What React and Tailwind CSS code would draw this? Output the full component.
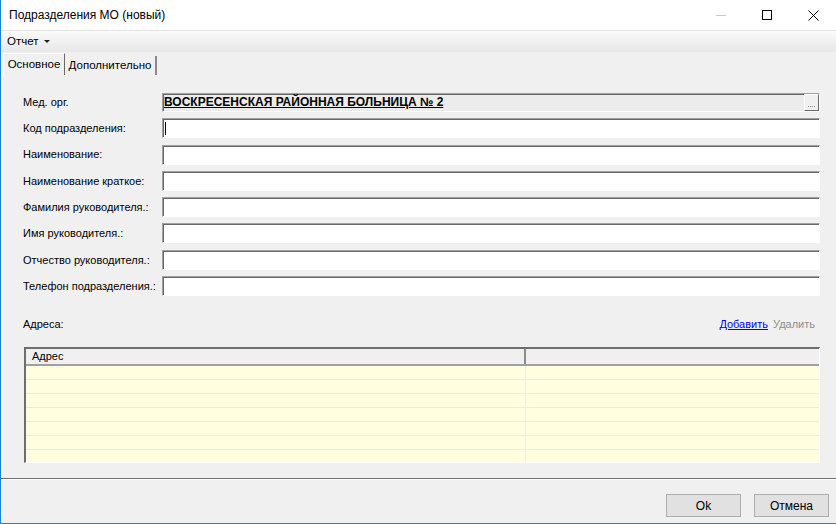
import React from "react";

const fields = [
  "Код подразделения:",
  "Наименование:",
  "Наименование краткое:",
  "Фамилия руководителя.:",
  "Имя руководителя.:",
  "Отчество руководителя.:",
  "Телефон подразделения.:",
];

const sunken =
  "border border-t-[#a0a0a0] border-l-[#a0a0a0] border-b-white border-r-white shadow-[inset_1px_1px_0_#696969]";

const App = () => {
  const rows = [0, 1, 2, 3, 4, 5, 6];

  return (
    <div
      className="w-[836px] h-[524px] bg-[#f0f0f0] flex flex-col border-l border-b border-[#1883d7] overflow-hidden text-[11px] text-black"
      style={{ fontFamily: '"Liberation Sans", Arial, sans-serif' }}
    >
      {/* title bar */}
      <div className="h-[30px] bg-white flex items-center shrink-0">
        <div className="pl-[8px] text-[12px] flex-1">Подразделения МО (новый)</div>
        <div className="flex items-center h-full">
          <div className="w-[46px] h-full flex items-center justify-center">
            <div className="w-[10px] h-px bg-[#c8c8c8]" />
          </div>
          <div className="w-[46px] h-full flex items-center justify-center">
            <div className="w-[10px] h-[10px] border border-black" />
          </div>
          <div className="w-[46px] h-full flex items-center justify-center">
            <svg width="11" height="11" viewBox="0 0 11 11">
              <path d="M0.5 0.5L10.5 10.5M10.5 0.5L0.5 10.5" stroke="#000" strokeWidth="1" />
            </svg>
          </div>
        </div>
      </div>

      {/* menu */}
      <div className="h-[22px] shrink-0 border-t border-[#e3e3e3] bg-gradient-to-b from-[#fbfbfb] to-[#e7e7e7] flex items-center pl-[6px] text-[11.5px]">
        <span>Отчет</span>
        <svg className="ml-[5px]" width="6" height="4" viewBox="0 0 6 4">
          <path d="M0 0H6L3 3Z" fill="#222" />
        </svg>
      </div>

      {/* tabs */}
      <div className="h-[23px] shrink-0 flex items-end pl-[2px]">
        <div className="h-[22px] w-[62px] flex items-center justify-center border-l border-t border-white border-r border-r-[#696969] bg-[#f0f0f0] text-[11.5px]">
          Основное
        </div>
        <div className="h-[19px] w-[92px] flex items-center justify-center border-r-2 border-[#8a8a8a] text-[11.5px]">
          Дополнительно
        </div>
      </div>

      {/* content */}
      <div className="flex-1 flex flex-col border-l border-white ml-px pt-[17px] pr-[16px]">
        <div className="flex flex-col gap-[6.3px]">
          <div className="flex items-center h-[20px]">
            <div className="w-[159px] pl-[20px] shrink-0">Мед. орг.</div>
            <div className={`flex-1 h-[19px] bg-[#ececec] flex items-center ${sunken}`}>
              <span className="pl-[1px] font-bold underline text-[12px] flex-1 leading-none">
                ВОСКРЕСЕНСКАЯ РАЙОННАЯ БОЛЬНИЦА № 2
              </span>
              <div className="w-[15px] h-full border-l border-t border-white border-r border-b border-r-[#696969] border-b-[#696969] bg-[#f0f0f0] flex items-end justify-center pb-[3px]">
                <div className="flex gap-px">
                  <div className="w-px h-px bg-[#c08080]" />
                  <div className="w-px h-px bg-[#8080c0]" />
                  <div className="w-px h-px bg-[#80a080]" />
                  <div className="w-px h-px bg-[#c08080]" />
                </div>
              </div>
            </div>
          </div>
          {fields.map((f, i) => (
            <div key={f} className="flex items-center h-[20px]">
              <div className="w-[159px] pl-[20px] shrink-0 whitespace-nowrap">{f}</div>
              <div className={`flex-1 h-[20px] bg-white flex items-center pl-[2px] ${sunken}`}>
                {i === 0 && <div className="w-px h-[13px] bg-black" />}
              </div>
            </div>
          ))}
        </div>

        <div className="flex items-center justify-between mt-[20px] pl-[20px] pr-[5px]">
          <span>Адреса:</span>
          <div className="flex gap-[5px]">
            <span className="text-[#0000ff] underline">Добавить</span>
            <span className="text-[#8d8d8d]">Удалить</span>
          </div>
        </div>

        <div className="mt-[14px] ml-[21px] h-[116px] border-t-2 border-l-2 border-[#6e6e6e] border-r border-b border-r-white border-b-white flex flex-col">
          <div className="h-[17px] flex border-b-2 border-[#a0a0a0] bg-[#f0f0f0] shrink-0">
            <div className="w-[500px] border-r-2 border-[#8c8c8c] pl-[6px] flex items-center">
              Адрес
            </div>
            <div className="flex-1" />
          </div>
          <div className="flex-1 bg-[#ffffe0] flex overflow-hidden">
            <div className="w-[500px] border-r border-[#efefe0]">
              {rows.map((r) => (
                <div key={r} className="h-[14px] border-b border-[#ececdc]" />
              ))}
            </div>
            <div className="flex-1">
              {rows.map((r) => (
                <div key={r} className="h-[14px] border-b border-[#ececdc]" />
              ))}
            </div>
          </div>
        </div>
        <div className="flex-1" />
      </div>

      {/* separator */}
      <div className="h-[2px] shrink-0 border-t border-[#6f6f6f] border-b border-b-white" />

      {/* footer */}
      <div className="h-[43px] shrink-0 flex items-start justify-end gap-[13px] pt-[14px] pr-[7px] text-[12px]">
        <button className="w-[75px] h-[23px] bg-[#e1e1e1] border border-[#adadad]">Ok</button>
        <button className="w-[75px] h-[23px] bg-[#e1e1e1] border border-[#adadad]">Отмена</button>
      </div>
    </div>
  );
};

export default App;
